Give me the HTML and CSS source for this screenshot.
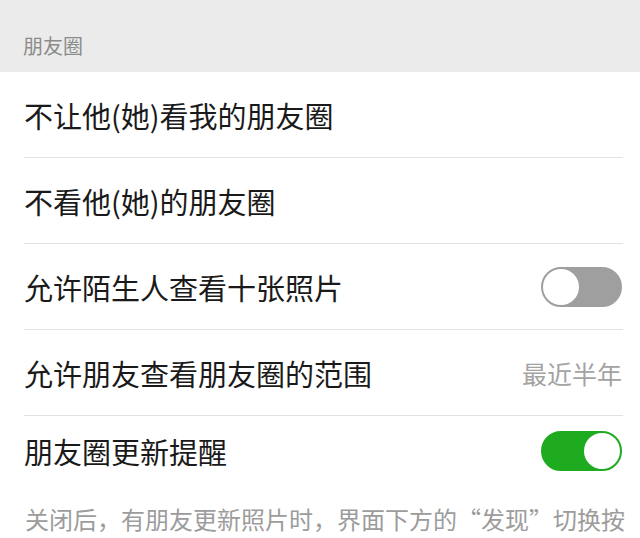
FILE: index.html
```html
<!DOCTYPE html>
<html lang="zh-CN">
<head>
<meta charset="utf-8">
<link rel="stylesheet" href="styles.css">
</head>
<body>
<div class="page">
  <div class="section-title">朋友圈</div>
  <div class="list">
    <div class="row"><span class="label">不让他(她)看我的朋友圈</span></div>
    <div class="row"><span class="label">不看他(她)的朋友圈</span></div>
    <div class="row"><span class="label">允许陌生人查看十张照片</span><span class="switch"><span class="knob"></span></span></div>
    <div class="row"><span class="label">允许朋友查看朋友圈的范围</span><span class="value">最近半年</span></div>
    <div class="row last"><span class="label">朋友圈更新提醒</span><span class="switch on"><span class="knob"></span></span></div>
  </div>
  <div class="footnote">关闭后，有朋友更新照片时，界面下方的“发现”切换按</div>
</div>
</body>
</html>
```
FILE: styles.css
```css
html, body {
  margin: 0;
  padding: 0;
  background: #ffffff;
}
body {
  font-family: "Noto Sans CJK SC", "Noto Sans", sans-serif;
  width: 640px;
  height: 538px;
  overflow: hidden;
}
.page {
  display: flex;
  flex-direction: column;
}
.section-title {
  background: #ebebeb;
  height: 72px;
  box-sizing: border-box;
  display: flex;
  align-items: flex-end;
  padding: 0 0 14px 23px;
  font-size: 20px;
  line-height: 24px;
  color: #8c8c8c;
}
.list {
  display: flex;
  flex-direction: column;
  padding-left: 24px;
  background: #fff;
}
.row {
  height: 86px;
  box-sizing: border-box;
  border-bottom: 1px solid #e2e2e2;
  margin-right: 17px;
  display: flex;
  align-items: center;
  justify-content: space-between;
  padding-left: 0;
  padding-right: 1px;
}
.row.last {
  border-bottom: none;
  height: 70px;
}
.label {
  font-size: 29px;
  line-height: 34px;
  color: #1a1a1a;
}
.value {
  font-size: 25px;
  line-height: 30px;
  color: #a3a3a3;
}
.switch {
  width: 81px;
  height: 40px;
  box-sizing: border-box;
  border-radius: 20px;
  background: #9f9f9f;
  border: 2px solid #9f9f9f;
  display: flex;
  align-items: center;
  justify-content: flex-start;
}
.switch.on {
  background: #1fab1f;
  border-color: #1fab1f;
  justify-content: flex-end;
}
.knob {
  width: 36px;
  height: 36px;
  border-radius: 50%;
  background: #fff;
}
.footnote {
  padding: 15px 12px 0 25px;
  font-size: 24px;
  line-height: 36px;
  color: #9c9c9c;
  white-space: nowrap;
}
```
